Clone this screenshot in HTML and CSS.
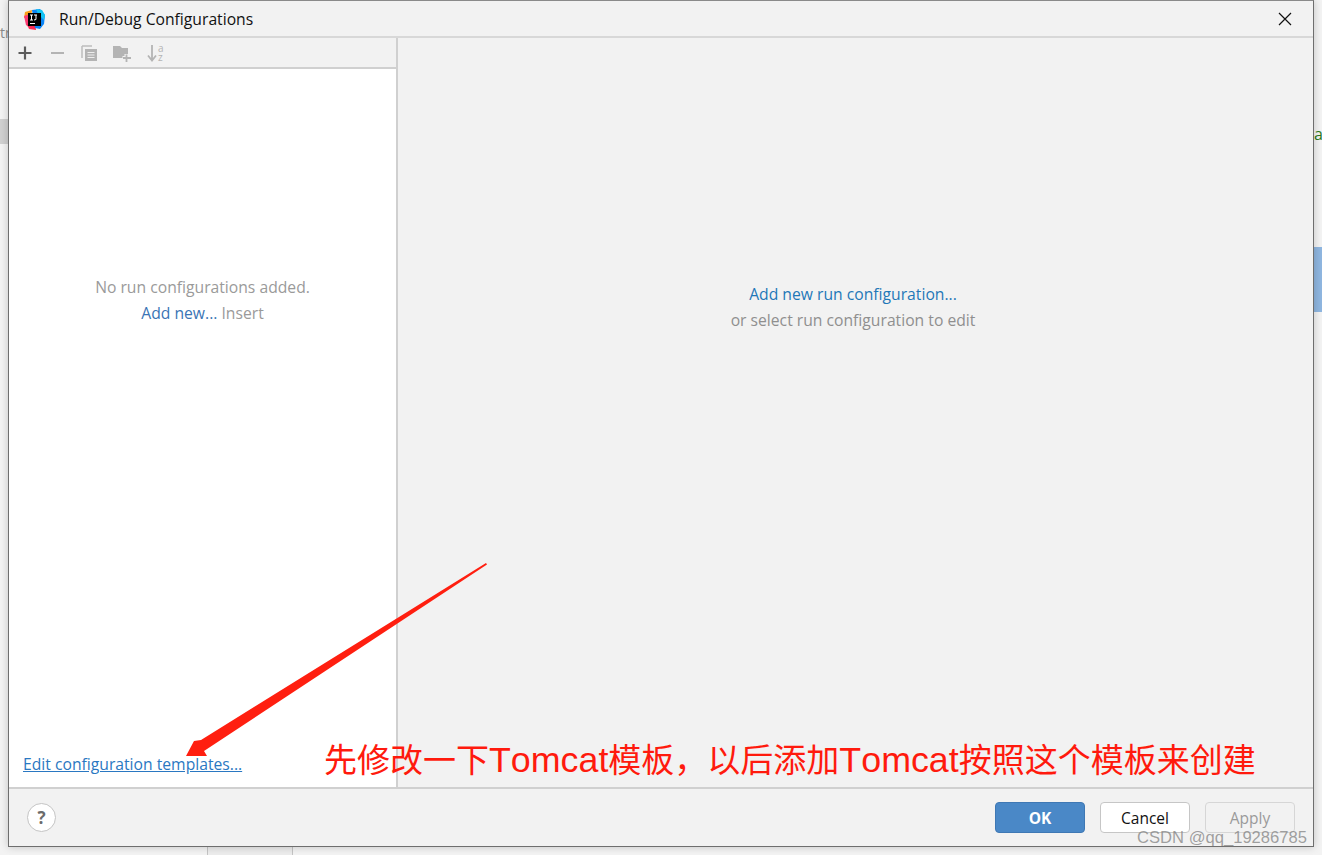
FILE: index.html
```html
<!DOCTYPE html>
<html lang="zh">
<head>
    <meta charset="UTF-8">
    <meta name="viewport" content="width=device-width, initial-scale=1.0">
    <title>Run/Debug Configurations</title>
    <link rel="stylesheet" href="styles.css">
</head>
<body>

    <!-- IDE behind the dialog -->
    <div class="bg-tab-left"></div>
    <div class="bg-text-left">tr</div>
    <div class="bg-text-right">a</div>
    <div class="bg-select-right"></div>
    <div class="bg-tab-bottom"></div>

    <div class="dialog">
        <div class="titlebar">
            <svg class="app-icon" width="22" height="22" viewBox="0 0 22 22">
                <path d="M2 3 L9 1 L8 9 L1 9 Z" fill="#f9a01c"/>
                <path d="M1 7 L7 5 L8 20 L3 16 Z" fill="#fb3b72"/>
                <path d="M4 15 L12 13 L13 21 L6 20 Z" fill="#fc2a55"/>
                <path d="M9 1 L17 0 L22 6 L21 15 L17 20 L12 19 Z" fill="#0a84f5"/>
                <path d="M13 0 L19 1 L22 6 L21 11 L15 5 Z" fill="#12c4f4"/>
                <rect x="5" y="4" width="13" height="13" fill="#000"/>
                <rect x="7" y="14" width="5" height="1" fill="#fff"/>
                <path d="M7 6 H10 M8.5 6 V11 M7 11 H10 M11 6 H14 M13 6 V10.5 L11 11" stroke="#fff" stroke-width="1" fill="none"/>
            </svg>
            <span class="title">Run/Debug Configurations</span>
            <svg class="close-icon" width="14" height="14" viewBox="0 0 14 14">
                <path d="M1 1 L13 13 M13 1 L1 13" stroke="#111" stroke-width="1.2" fill="none"/>
            </svg>
        </div>

        <div class="main">
            <div class="left-panel">
                <div class="toolbar">
                    <svg width="16" height="16" viewBox="0 0 16 16"><path d="M8 1.5 V14.5 M1.5 8 H14.5" stroke="#5c5c5c" stroke-width="2.2"/></svg>
                    <svg width="16" height="16" viewBox="0 0 16 16"><path d="M2 8 H15" stroke="#b4b4b4" stroke-width="2"/></svg>
                    <svg width="16" height="16" viewBox="0 0 16 16">
                        <path d="M1 1 H11 M1 1 V13" stroke="#bdbdbd" stroke-width="1.5" fill="none"/>
                        <rect x="4" y="4" width="12" height="12" fill="#b4b4b4"/>
                        <path d="M6.5 7.5 H13.5 M6.5 10 H13.5 M6.5 12.5 H13.5" stroke="#eee" stroke-width="1"/>
                    </svg>
                    <svg width="18" height="18" viewBox="0 0 18 18">
                        <path d="M0 2 H7 L9 4 H15 V14 H0 Z" fill="#b4b4b4"/>
                        <path d="M13.5 10 V18 M9.5 14 H18" stroke="#f2f2f2" stroke-width="4"/>
                        <path d="M13.5 10.5 V18 M10 14 H18" stroke="#b4b4b4" stroke-width="1.8"/>
                    </svg>
                    <svg class="sort-icon" width="18" height="20" viewBox="0 0 18 20">
                        <path d="M5 2 V17 M1 12.5 L5 17.5 L9 12.5" stroke="#b4b4b4" stroke-width="1.8" fill="none"/>
                        <text class="sort-letter" x="11" y="9">a</text>
                        <text class="sort-letter" x="11" y="18">z</text>
                    </svg>
                </div>
                <div class="list-area">
                    <div class="empty-note">
                        <p class="empty-line">No run configurations added.</p>
                        <p class="empty-add"><a class="link-dark" href="#">Add new...</a> Insert</p>
                    </div>
                    <a class="templates-link" href="#">Edit configuration templates...</a>
                </div>
            </div>
            <div class="right-panel">
                <a class="link-add" href="#">Add new run configuration...</a>
                <p class="right-hint">or select run configuration to edit</p>
            </div>
        </div>

        <div class="footer">
            <button class="help-btn">?</button>
            <div class="footer-buttons">
                <button class="btn btn-ok">OK</button>
                <button class="btn btn-cancel">Cancel</button>
                <button class="btn btn-apply">Apply</button>
            </div>
        </div>
    </div>

    <!-- red annotation on top of the screenshot -->
    <svg class="arrow" width="320" height="210" viewBox="0 0 320 210">
        <path d="M301 2 L302 3.5 L19 190 L22 195 L1 195 L9 180 L16 179 Z" fill="#ff1f10"/>
    </svg>
    <div class="note">先修改一下<span class="note-latin">Tomcat</span>模板，以后添加<span class="note-latin">Tomcat</span>按照这个模板来创建</div>
    <div class="watermark">CSDN @qq_19286785</div>

</body>
</html>
```

FILE: styles.css
```css
html, body {
    margin: 0;
    padding: 0;
}
body {
    width: 1322px;
    height: 855px;
    overflow: hidden;
    position: relative;
    background-color: #f3f3f3;
    font-family: "Open Sans", "Noto Sans", sans-serif;
}

/* things behind the dialog */
.bg-tab-left {
    position: absolute;
    left: 0;
    top: 119px;
    width: 8px;
    height: 25px;
    background-color: #d0d0d0;
}
.bg-text-left {
    position: absolute;
    left: 0;
    top: 23px;
    font-size: 14px;
    color: #8a8a8a;
}
.bg-text-right {
    position: absolute;
    left: 1314px;
    top: 123px;
    font-size: 16px;
    color: #2c7a1e;
}
.bg-select-right {
    position: absolute;
    left: 1314px;
    top: 247px;
    width: 8px;
    height: 65px;
    background-color: #8fb6e0;
}
.bg-tab-bottom {
    position: absolute;
    left: 207px;
    top: 847px;
    width: 84px;
    height: 8px;
    background-color: #ececec;
    border-left: 1px solid #c4c4c4;
    border-right: 1px solid #c4c4c4;
}

/* dialog */
.dialog {
    position: relative;
    margin-left: 8px;
    width: 1306px;
    height: 847px;
    box-sizing: border-box;
    background-color: #f2f2f2;
    border: 1px solid #6e6e6e;
    border-top-color: #8a8a8a;
    box-shadow: 0 0 8px rgba(0, 0, 0, 0.2);
    display: flex;
    flex-direction: column;
}
.titlebar {
    height: 35px;
    flex: none;
    display: flex;
    align-items: center;
    padding: 0 21px 0 14px;
    border-bottom: 2px solid #d8d8d8;
}
.app-icon {
    flex: none;
    margin-top: 3px;
}
.title {
    margin-left: 14px;
    font-size: 15.7px;
    color: #111;
    flex: 1;
}
.main {
    flex: 1;
    display: flex;
    min-height: 0;
}
.left-panel {
    width: 387px;
    flex: none;
    display: flex;
    flex-direction: column;
    border-right: 2px solid #d0d0d0;
}
.toolbar {
    height: 29px;
    flex: none;
    display: flex;
    align-items: center;
    gap: 16px;
    padding-left: 8px;
    border-bottom: 2px solid #d0d0d0;
}
.sort-icon {
    overflow: visible;
}
.sort-letter {
    font-size: 10px;
    fill: #b4b4b4;
}
.list-area {
    flex: 1;
    background-color: #fff;
    position: relative;
    display: flex;
    flex-direction: column;
    align-items: center;
    padding-top: 208px;
}
.empty-note {
    text-align: center;
    font-size: 15.7px;
    color: #9a9a9a;
}
.empty-line {
    margin: 0;
    line-height: 20px;
}
.empty-add {
    margin: 6px 0 0;
    line-height: 20px;
}
.link-dark {
    color: #3a75b5;
    text-decoration: none;
}
.templates-link {
    margin-top: auto;
    margin-bottom: 13px;
    align-self: flex-start;
    margin-left: 14px;
    font-size: 15.7px;
    line-height: 20px;
    color: #2a78c2;
    text-decoration: underline;
}
.right-panel {
    flex: 1;
    display: flex;
    flex-direction: column;
    align-items: center;
    padding-top: 246px;
    padding-right: 5px;
    font-size: 15.7px;
}
.link-add {
    line-height: 20px;
    color: #1f78b8;
    text-decoration: none;
}
.right-hint {
    margin: 6px 0 0;
    line-height: 20px;
    color: #8f8f8f;
}

/* footer */
.footer {
    height: 57px;
    flex: none;
    display: flex;
    align-items: center;
    justify-content: space-between;
    padding: 0 18px 0 18px;
    border-top: 2px solid #d0d0d0;
}
.help-btn {
    width: 29px;
    height: 29px;
    padding: 0;
    border-radius: 50%;
    border: 1px solid #c4c4c4;
    background-color: #fff;
    color: #6b6b6b;
    font-family: inherit;
    font-size: 17px;
    font-weight: 700;
}
.footer-buttons {
    display: flex;
    gap: 15px;
}
.btn {
    width: 90px;
    height: 31px;
    padding: 0;
    box-sizing: border-box;
    border-radius: 4px;
    font-family: inherit;
    font-size: 15.5px;
}
.btn-ok {
    background-color: #4a88c7;
    border: 1px solid #3f78b4;
    color: #fff;
    font-weight: 700;
}
.btn-cancel {
    background-color: #fff;
    border: 1px solid #c6c6c6;
    color: #111;
}
.btn-apply {
    background-color: #f2f2f2;
    border: 1px solid #d6d6d6;
    color: #9a9a9a;
}

/* annotation */
.arrow {
    position: absolute;
    left: 185px;
    top: 561px;
}
.note {
    position: absolute;
    left: 324px;
    top: 738px;
    font-family: "Liberation Sans", "Noto Sans CJK SC", sans-serif;
    font-size: 33px;
    line-height: 44px;
    color: #ff1a0d;
    white-space: nowrap;
    font-kerning: none;
}
.note-latin {
    font-size: 35.8px;
}
.watermark {
    position: absolute;
    left: 1137px;
    top: 828px;
    font-family: "Liberation Sans", sans-serif;
    font-size: 16.6px;
    line-height: 19px;
    color: rgba(130, 130, 130, 0.75);
    white-space: nowrap;
}
```
